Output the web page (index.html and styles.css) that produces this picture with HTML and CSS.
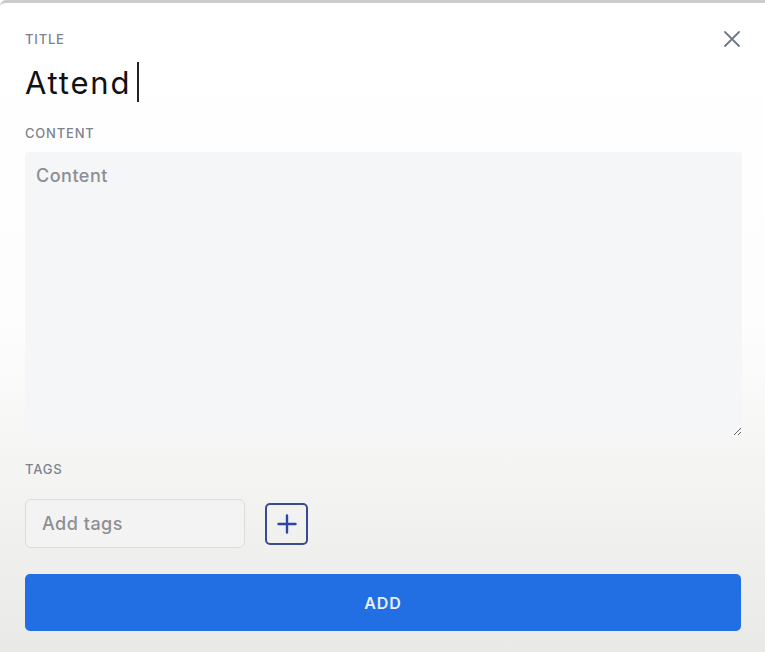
FILE: index.html
```html
<!DOCTYPE html>
<html lang="en">
<head>
<meta charset="utf-8">
<title>Add note</title>
<link rel="stylesheet" href="styles.css">
</head>
<body>
<div class="modal">
  <div class="header">
    <div class="field">
      <label class="label">TITLE</label>
      <div class="title-input">Attend<span class="caret"></span></div>
    </div>
    <button class="close" aria-label="Close">
      <svg width="18" height="18" viewBox="0 0 18 18"><path d="M2 2 L16 16 M16 2 L2 16" stroke="#6f7785" stroke-width="1.8" stroke-linecap="round" fill="none"/></svg>
    </button>
  </div>

  <div class="field content-field">
    <label class="label">CONTENT</label>
    <textarea class="content" placeholder="Content"></textarea>
  </div>

  <div class="field tags-field">
    <label class="label">TAGS</label>
    <div class="tags-row">
      <input class="tags-input" type="text" placeholder="Add tags">
      <button class="plus" aria-label="Add tag">
        <svg width="20" height="20" viewBox="0 0 20 20"><path d="M10 1.5 V18.5 M1.5 10 H18.5" stroke="#2e45a8" stroke-width="2.4" stroke-linecap="round" fill="none"/></svg>
      </button>
    </div>
  </div>

  <button class="add">ADD</button>
</div>
</body>
</html>
```
FILE: styles.css
```css
* { box-sizing: border-box; }
html, body { margin: 0; height: 100%; }
body {
  font-family: Inter, "Open Sans", sans-serif;
  background: linear-gradient(#ffffff 0%, #fdfdfd 50%, #f3f3f2 75%, #e9e9e7 100%);
  height: 652px;
  overflow: hidden;
}
.modal {
  border-top: 3px solid #cbcbcb;
  border-top-left-radius: 6px;
  padding: 0 24px 0 25px;
}
.header {
  display: flex;
  justify-content: space-between;
  align-items: flex-start;
  padding-top: 27px;
}
.label {
  display: block;
  font-size: 13px;
  font-weight: 500;
  color: #7b8290;
  letter-spacing: 0.8px;
  line-height: 18px;
}
.title-input {
  display: flex;
  align-items: center;
  font-size: 31px;
  font-weight: 400;
  color: #111;
  height: 42px;
  margin-top: 13px;
  letter-spacing: 1.8px;
}
.caret {
  display: inline-block;
  width: 2px;
  height: 40px;
  background: #222;
  margin-left: 6px;
}
.close {
  border: 0;
  background: none;
  padding: 0;
  width: 18px;
  height: 18px;
  display: flex;
}
.content-field { margin-top: 21px; }
.content {
  display: block;
  width: 717px;
  height: 284px;
  margin-top: 10px;
  border: 0;
  border-radius: 4px;
  background: #f5f6f8;
  padding: 13px 11px;
  font-family: Inter, "Open Sans", sans-serif;
  font-size: 18px;
  font-weight: 500;
  letter-spacing: 0.5px;
  color: #333;
  outline: none;
}
.content::placeholder { color: #8b8e94; }
.tags-field { margin-top: 24px; }
.tags-row {
  display: flex;
  align-items: center;
  gap: 20px;
  margin-top: 21px;
}
.tags-input {
  width: 220px;
  height: 49px;
  border: 1px solid #dcdcdc;
  border-radius: 6px;
  background: #f3f3f3;
  padding: 0 16px;
  font-family: Inter, "Open Sans", sans-serif;
  font-size: 18px;
  font-weight: 500;
  letter-spacing: 0.5px;
  outline: none;
}
.tags-input::placeholder { color: #8d8f93; }
.plus {
  width: 43px;
  height: 42px;
  border: 2px solid #3b4892;
  border-radius: 5px;
  background: transparent;
  display: flex;
  align-items: center;
  justify-content: center;
  padding: 0;
}
.add {
  display: block;
  width: 716px;
  height: 57px;
  margin-top: 26px;
  border: 0;
  border-radius: 5px;
  background: #226fe3;
  color: #e9eefa;
  font-family: Inter, "Open Sans", sans-serif;
  font-size: 16px;
  font-weight: 600;
  letter-spacing: 1px;
}
```
